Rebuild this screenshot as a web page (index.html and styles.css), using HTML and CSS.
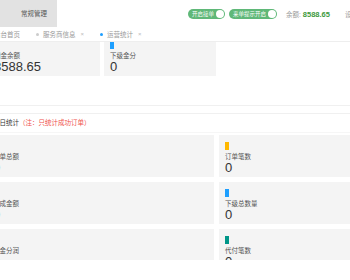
FILE: index.html
```html
<!DOCTYPE html>
<html lang="zh-CN">
<head>
<meta charset="utf-8">
<title>运营统计</title>
<link rel="stylesheet" href="styles.css">
</head>
<body>
<div class="header">
  <div class="nav-tab">常规管理</div>
  <div class="header-right">
    <span class="switch">开启接单<i class="knob"></i></span>
    <span class="switch">来单提示开启<i class="knob"></i></span>
    <span class="balance"><span class="balance-label">余额:</span><b class="balance-value">8588.65</b></span>
    <span class="settings">设置</span>
  </div>
</div>
<div class="tabbar">
  <div class="tabs">
    <div class="tab">后台首页</div>
    <div class="tab"><i class="dot"></i><span>服务商信息</span><span class="close">×</span></div>
    <div class="tab active"><i class="dot"></i><span>运营统计</span><span class="close">×</span></div>
  </div>
</div>
<div class="main">
  <div class="content">
    <section class="summary">
      <div class="card-row">
        <div class="stat"><i class="marker m-green"></i><div class="label">佣金余额</div><div class="value">8588.65</div></div>
        <div class="stat"><i class="marker m-blue"></i><div class="label">下级金分</div><div class="value">0</div></div>
      </div>
    </section>
    <section class="panel">
      <div class="panel-header">今日统计<span class="note">（注：只统计成功订单）</span></div>
      <div class="panel-body grid">
        <div class="stat"><i class="marker m-green"></i><div class="label">订单总额</div><div class="value">0</div></div>
        <div class="stat"><i class="marker m-orange"></i><div class="label">订单笔数</div><div class="value">0</div></div>
        <div class="stat"><i class="marker m-green"></i><div class="label">完成金额</div><div class="value">0</div></div>
        <div class="stat"><i class="marker m-blue"></i><div class="label">下级总数量</div><div class="value">0</div></div>
        <div class="stat"><i class="marker m-green"></i><div class="label">佣金分润</div><div class="value">0</div></div>
        <div class="stat"><i class="marker m-teal"></i><div class="label">代付笔数</div><div class="value">0</div></div>
      </div>
    </section>
  </div>
</div>
</body>
</html>
```
FILE: styles.css
```css
html, body {
  margin: 0;
  padding: 0;
  overflow: hidden;
  background: #fff;
}
body {
  width: 350px;
  height: 280px;
  font-family: "Liberation Sans", "Noto Sans CJK SC", sans-serif;
  color: #333;
}
.header {
  display: flex;
  height: 27px;
  overflow: hidden;
  white-space: nowrap;
}
.nav-tab {
  flex-shrink: 0;
  width: 57px;
  box-sizing: border-box;
  padding-left: 21px;
  background: #e2e2e2;
  color: #555;
  font-size: 6.5px;
  line-height: 27px;
}
.header-right {
  display: flex;
  align-items: center;
  flex-shrink: 0;
  margin-left: 131px;
}
.switch {
  display: flex;
  align-items: center;
  gap: 2px;
  height: 10px;
  box-sizing: border-box;
  padding: 0 1px 0 4px;
  border-radius: 5px;
  background: #5fb878;
  color: #fff;
  font-size: 5.5px;
}
.switch + .switch {
  margin-left: 4px;
}
.knob {
  display: block;
  width: 8px;
  height: 8px;
  border-radius: 50%;
  background: #fff;
}
.balance {
  margin-left: 9px;
  font-size: 6.5px;
  color: #999;
}
.balance-value {
  margin-left: 2px;
  font-size: 7.5px;
  color: #3d9a3d;
}
.settings {
  margin-left: 15px;
  font-size: 6.5px;
  color: #999;
}
.tabbar {
  height: 15px;
  box-sizing: border-box;
  border-bottom: 1px solid #eee;
  overflow: hidden;
}
.tabs {
  display: flex;
  height: 100%;
  margin-left: -14px;
  white-space: nowrap;
  font-size: 6.5px;
  color: #999;
}
.tab {
  display: flex;
  align-items: center;
  gap: 4px;
  padding: 0 8px;
}
.dot {
  display: block;
  width: 3px;
  height: 3px;
  border-radius: 50%;
  background: #ccc;
}
.active .dot {
  background: #1e9fff;
}
.close {
  font-size: 6px;
  color: #bbb;
  margin-left: 1px;
}
.main {
  height: 218px;
  overflow: hidden;
}
.content {
  margin: -8px 0 0 -12px;
}
.summary {
  padding-bottom: 29px;
  border-bottom: 1px solid #f0f0f0;
}
.card-row {
  display: flex;
  gap: 4px;
}
.summary .stat {
  width: 112px;
}
.stat {
  box-sizing: border-box;
  padding: 7px 6px 3px;
  background: #f4f4f4;
}
.marker {
  display: block;
  width: 4px;
  height: 8px;
}
.m-green { background: #5fb878; }
.m-blue { background: #1e9fff; }
.m-orange { background: #ffb800; }
.m-teal { background: #009688; }
.label {
  margin-top: 3px;
  font-size: 6.5px;
  line-height: 8px;
  color: #555;
  white-space: nowrap;
}
.value {
  font-size: 13px;
  line-height: 13px;
  color: #333;
}
.panel {
  margin-top: 7px;
  border-top: 1px solid #f0f0f0;
}
.panel-header {
  height: 18px;
  line-height: 18px;
  padding-left: 5px;
  font-size: 6.5px;
  color: #333;
  border-bottom: 1px solid #f6f6f6;
  white-space: nowrap;
}
.note {
  color: #f0504a;
}
.panel-body {
  padding-top: 2px;
}
.grid {
  display: grid;
  grid-template-columns: 227px 227px;
  gap: 5px;
  margin-left: -1px;
}
```
